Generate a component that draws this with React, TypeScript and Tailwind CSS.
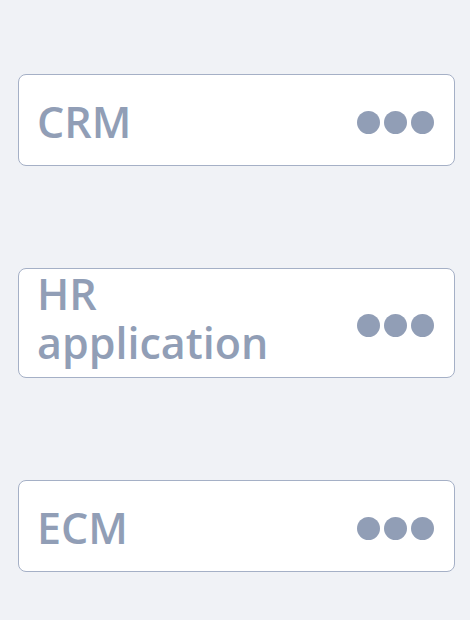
const items = [
  { name: "CRM", twoLines: false },
  { name: "HR application", twoLines: true },
  { name: "ECM", twoLines: false },
];

function MoreDots() {
  return (
    <svg width="77" height="23" viewBox="0 0 77 23" className="mt-[4px] shrink-0">
      <circle cx="11.5" cy="11.5" r="11.5" fill="#919eb6" />
      <circle cx="38.5" cy="11.5" r="11.5" fill="#919eb6" />
      <circle cx="65.5" cy="11.5" r="11.5" fill="#919eb6" />
    </svg>
  );
}

export default function App() {
  return (
    <div className="min-h-[620px] bg-[#f0f2f6] pl-[18px] pr-[15px] pt-[74px] font-['Open_Sans',sans-serif]">
      <div className="flex flex-col gap-[102px]">
        {items.map((item) => (
          <div
            key={item.name}
            className="flex min-h-[92px] items-center justify-between rounded-lg border border-[#a5b0c6] bg-white pl-[18px] pr-[20px]"
          >
            <span
              className={
                item.twoLines
                  ? "mb-[10px] max-w-[280px] text-[43px] font-semibold leading-[49px] text-[#919eb6]"
                  : "mt-[3px] max-w-[280px] text-[43px] font-semibold leading-[49px] text-[#919eb6]"
              }
            >
              {item.name}
            </span>
            <MoreDots />
          </div>
        ))}
      </div>
    </div>
  );
}
